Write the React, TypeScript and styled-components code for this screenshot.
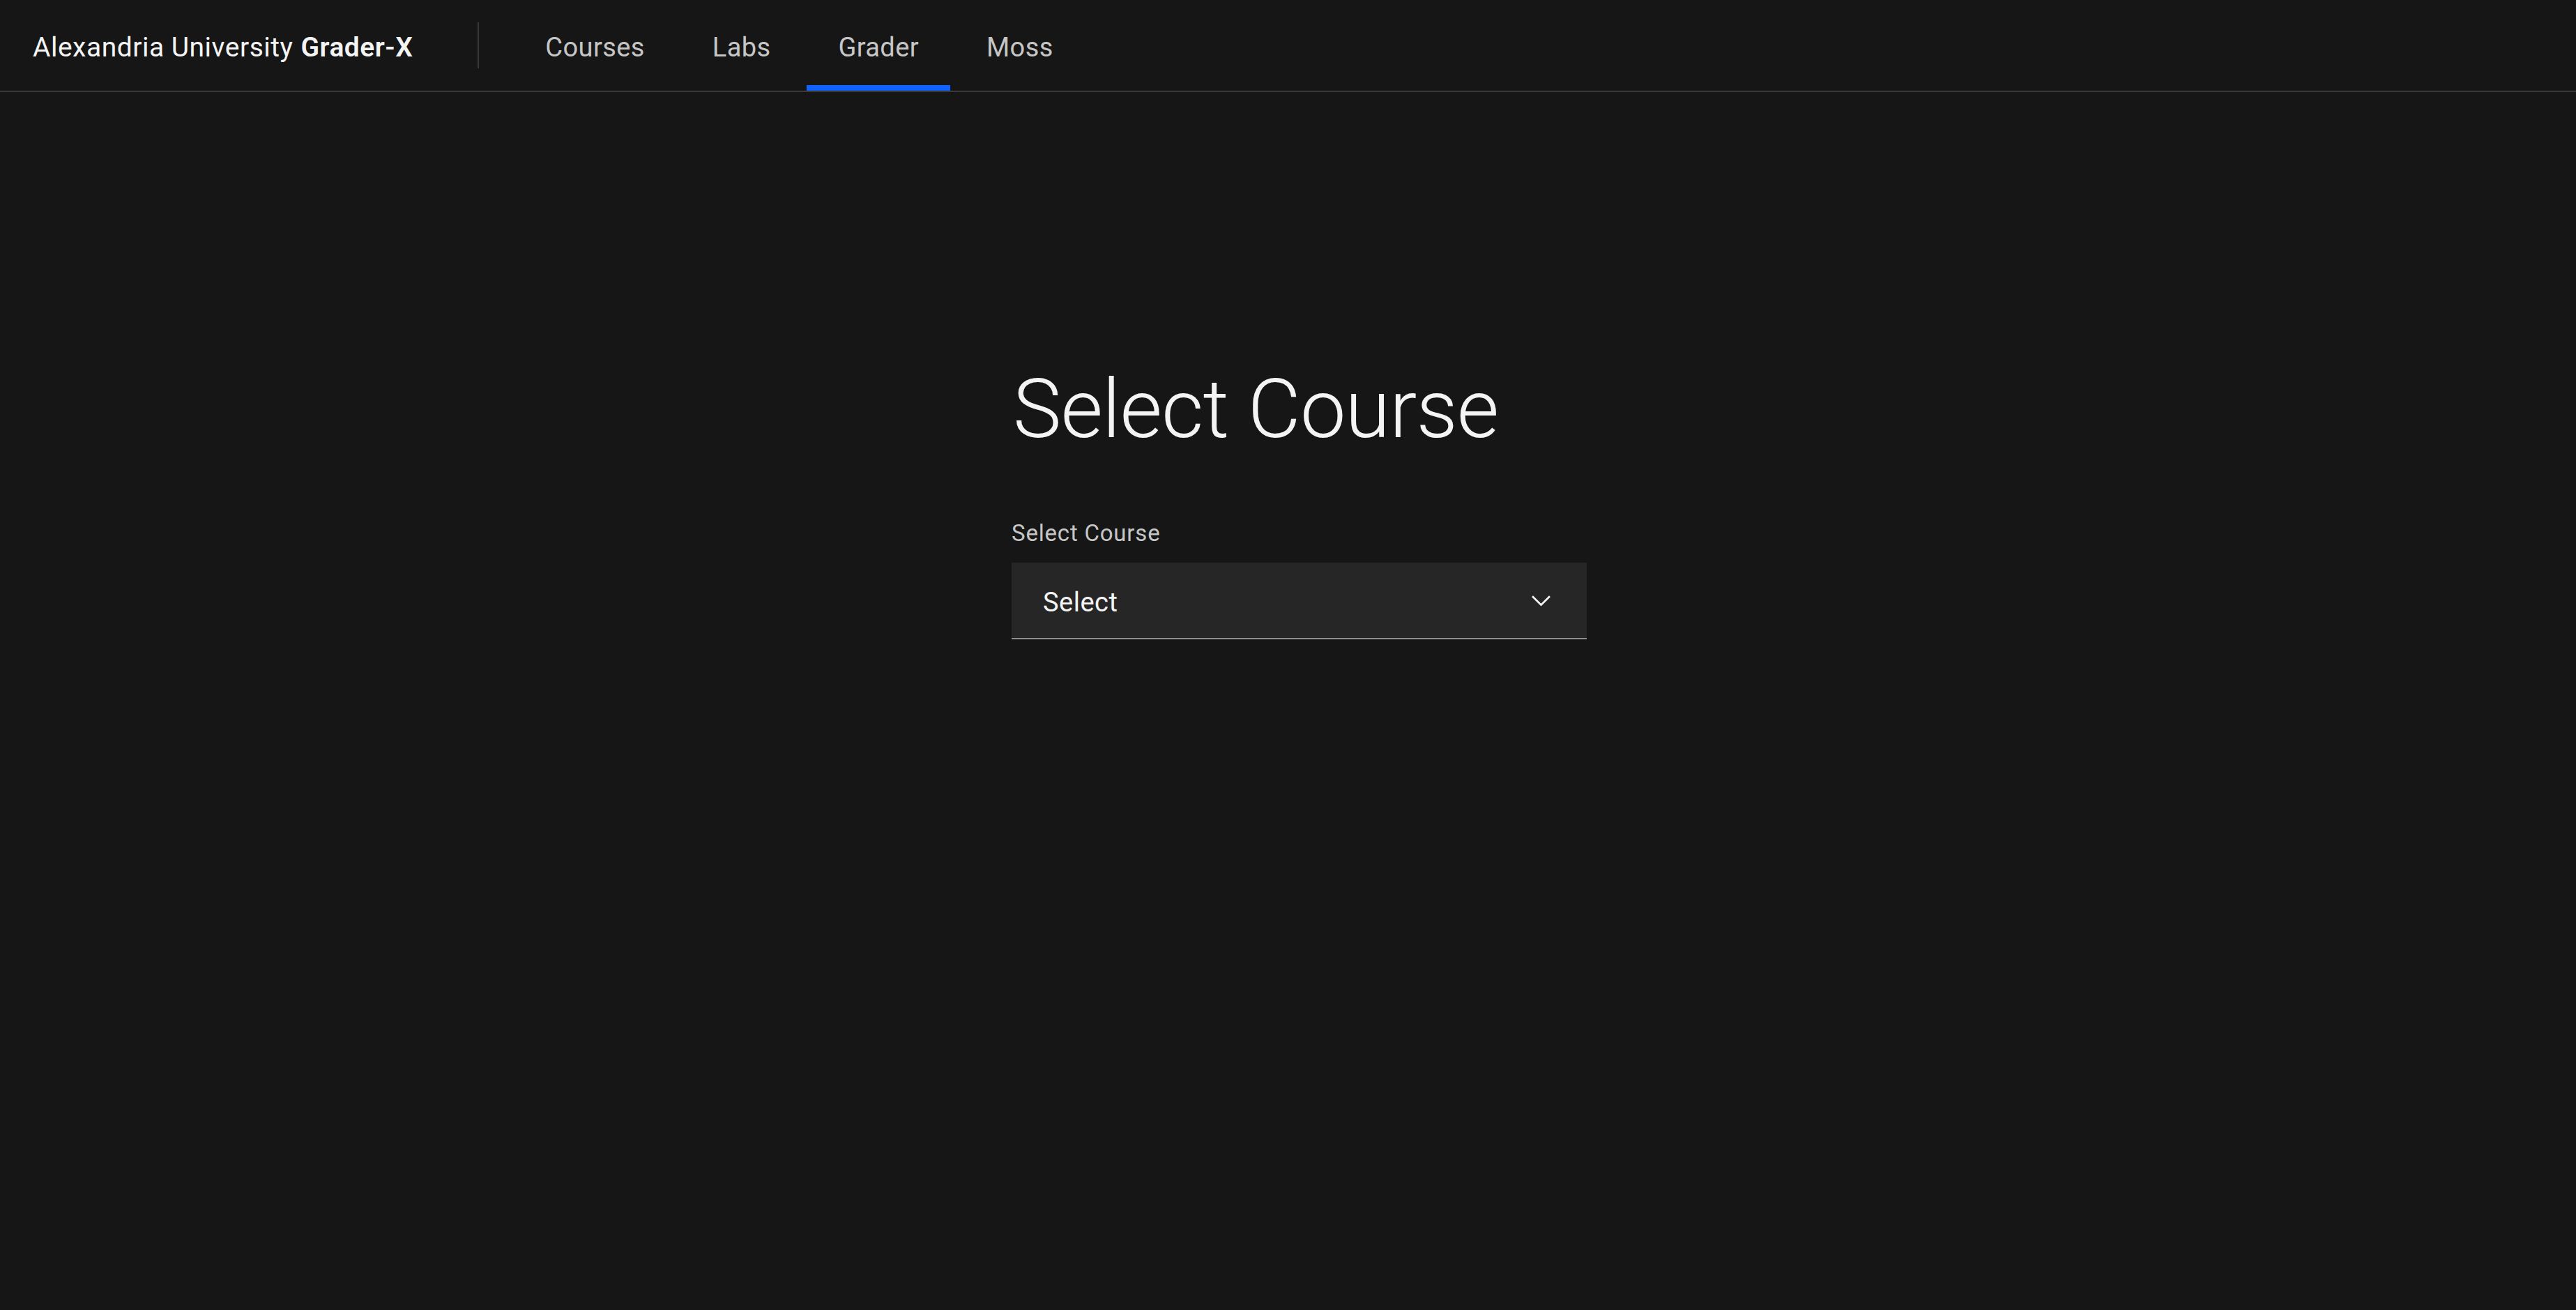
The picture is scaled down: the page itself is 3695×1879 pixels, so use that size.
import React from "react";
import styled, { createGlobalStyle } from "styled-components";

const GlobalStyle = createGlobalStyle`
  * { box-sizing: border-box; }
  html, body {
    margin: 0;
    padding: 0;
    background: #161616;
    font-family: Roboto, "Liberation Sans", Arial, sans-serif;
    color: #f4f4f4;
  }
`;

const Page = styled.div`
  min-height: 100vh;
  background: #161616;
  display: flex;
  flex-direction: column;
`;

const Header = styled.header`
  display: flex;
  align-items: stretch;
  height: 132px;
  border-bottom: 2px solid #393939;
  background: #161616;
`;

const Brand = styled.a`
  display: flex;
  align-items: center;
  padding: 6px 93px 0 47px;
  font-size: 39px;
  letter-spacing: 0.5px;
  color: #f4f4f4;
  text-decoration: none;
  white-space: nowrap;
  font-weight: 400;

  strong {
    font-weight: 600;
    margin-left: 11px;
  }
`;

const Divider = styled.span`
  align-self: center;
  width: 2px;
  height: 66px;
  background: #393939;
`;

const Nav = styled.nav`
  display: flex;
  align-items: stretch;
  gap: 7px;
  padding-left: 50px;
`;

const NavItem = styled.a<{ $active?: boolean }>`
  display: flex;
  align-items: center;
  padding: 6px 45px 0;
  font-size: 38px;
  letter-spacing: 0.4px;
  color: #c6c6c6;
  text-decoration: none;
  box-shadow: ${(p) => (p.$active ? "inset 0 -8px 0 0 #0f62fe" : "none")};
`;

const Main = styled.main`
  display: grid;
  grid-template-columns: 1451px 825px 1fr;
  padding-top: 397px;
`;

const Column = styled.section`
  grid-column: 2;
  display: flex;
  flex-direction: column;
`;

const Title = styled.h1`
  margin: 0 0 0 2px;
  font-size: 117px;
  line-height: 1;
  font-weight: 300;
  letter-spacing: -0.9px;
  color: #f4f4f4;
`;

const Label = styled.label`
  margin-top: 102px;
  font-size: 33px;
  line-height: 1;
  letter-spacing: 0.8px;
  color: #c6c6c6;
`;

const Field = styled.button`
  margin-top: 26px;
  display: flex;
  align-items: center;
  justify-content: space-between;
  height: 110px;
  width: 100%;
  padding: 6px 44px 0 45px;
  background: #262626;
  border: none;
  border-bottom: 2px solid #8d8d8d;
  color: #f4f4f4;
  font-family: inherit;
  font-size: 38px;
  letter-spacing: 0.5px;
  cursor: pointer;
  text-align: left;
`;

const Chevron = styled.svg`
  width: 43px;
  height: 43px;
  margin-top: -6px;
  fill: #f4f4f4;
  flex: none;
`;

export default function App() {
  return (
    <>
      <GlobalStyle />
      <Page>
        <Header>
          <Brand href="#">
            Alexandria University<strong>Grader-X</strong>
          </Brand>
          <Divider />
          <Nav>
            <NavItem href="#">Courses</NavItem>
            <NavItem href="#">Labs</NavItem>
            <NavItem href="#" $active>
              Grader
            </NavItem>
            <NavItem href="#">Moss</NavItem>
          </Nav>
        </Header>
        <Main>
          <Column>
            <Title>Select Course</Title>
            <Label>Select Course</Label>
            <Field type="button">
              <span>Select</span>
              <Chevron viewBox="0 0 16 16" aria-hidden="true">
                <path d="M8 11L3 6 3.7 5.3 8 9.6 12.3 5.3 13 6z" />
              </Chevron>
            </Field>
          </Column>
        </Main>
      </Page>
    </>
  );
}
